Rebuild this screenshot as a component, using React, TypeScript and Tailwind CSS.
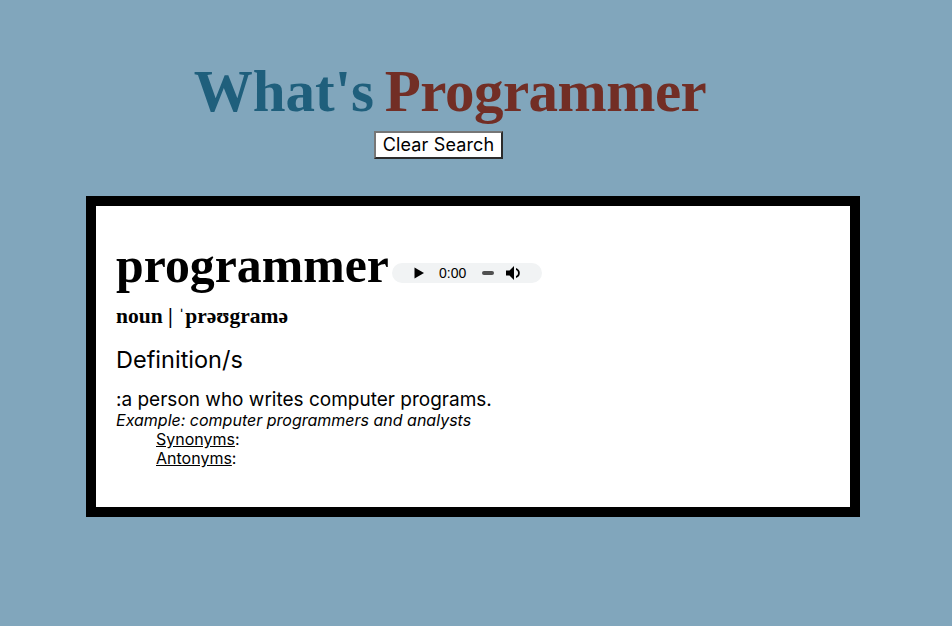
const bodyFont = "font-['Inter','Noto_Sans',sans-serif]";

function AudioPlayer() {
  return (
    <div className="ml-1 mt-[14px] flex h-5 w-[150px] shrink-0 items-center rounded-full bg-[#f1f3f4] text-black">
      <svg viewBox="0 0 12 12" className="ml-[21px] h-3 w-3" fill="currentColor">
        <path d="M1.5 0.5 L11 6 L1.5 11.5 Z" />
      </svg>
      <span className="ml-[14px] font-['Liberation_Sans',sans-serif] text-sm leading-none">0:00</span>
      <span className="ml-4 h-1 w-3 rounded-full bg-[#505050]" />
      <svg viewBox="0 0 18 18" className="ml-[11px] h-[18px] w-[18px]" fill="currentColor">
        <path d="M1 6.5 V11.5 H4.5 L9 16 V2 L4.5 6.5 Z" />
        <path d="M11 4 C14 5 14.8 7 14.8 9 C14.8 11 14 13 11 14 V12 C12.5 11.4 13 10.2 13 9 C13 7.8 12.5 6.6 11 6 Z" />
      </svg>
    </div>
  );
}

export default function App() {
  return (
    <div className={`min-h-[626px] bg-[#81a6bc] pt-[58px] text-black ${bodyFont}`}>
      <header className="flex flex-col items-center pr-[52px]">
        <h1 className="font-['Liberation_Serif',serif] text-[59px] font-bold leading-[66px] [word-spacing:-4px]">
          <span className="text-[#1f5f7c]">What's</span>{" "}
          <span className="tracking-[-0.5px] text-[#722e25]">Programmer</span>
        </h1>
        <button className="ml-[-23px] mt-[7px] h-7 w-[129px] border-2 border-t-[#767676] border-l-[#767676] border-r-[#2b2b2b] border-b-[#2b2b2b] bg-white text-[18px] leading-none tracking-[0.15px]">
          Clear Search
        </button>
      </header>

      <main className="ml-[86px] mt-[37px] h-[321px] w-[774px] border-10 border-black bg-white pl-[20px] pt-[31px]">
        <div className="flex items-center">
          <h2 className="w-[272px] font-['Liberation_Serif',serif] text-[49.8px] font-bold leading-[58px]">programmer</h2>
          <AudioPlayer />
        </div>
        <p className="mt-[8px] font-['Liberation_Serif',serif] text-[21.5px] font-bold leading-[26px]">
          noun | ˈprəʊgramə
        </p>
        <h3 className="mt-[17px] text-[23.5px] leading-[28px]">Definition/s</h3>
        <p className="mt-[14px] text-[19px] leading-[23px]">:a person who writes computer programs.</p>
        <p className="text-base italic leading-[19px]">Example: computer programmers and analysts</p>
        <p className="pl-10 text-base leading-[19px]"><span className="underline">Synonyms</span>:</p>
        <p className="pl-10 text-base leading-[19px]"><span className="underline">Antonyms</span>:</p>
      </main>
    </div>
  );
}
